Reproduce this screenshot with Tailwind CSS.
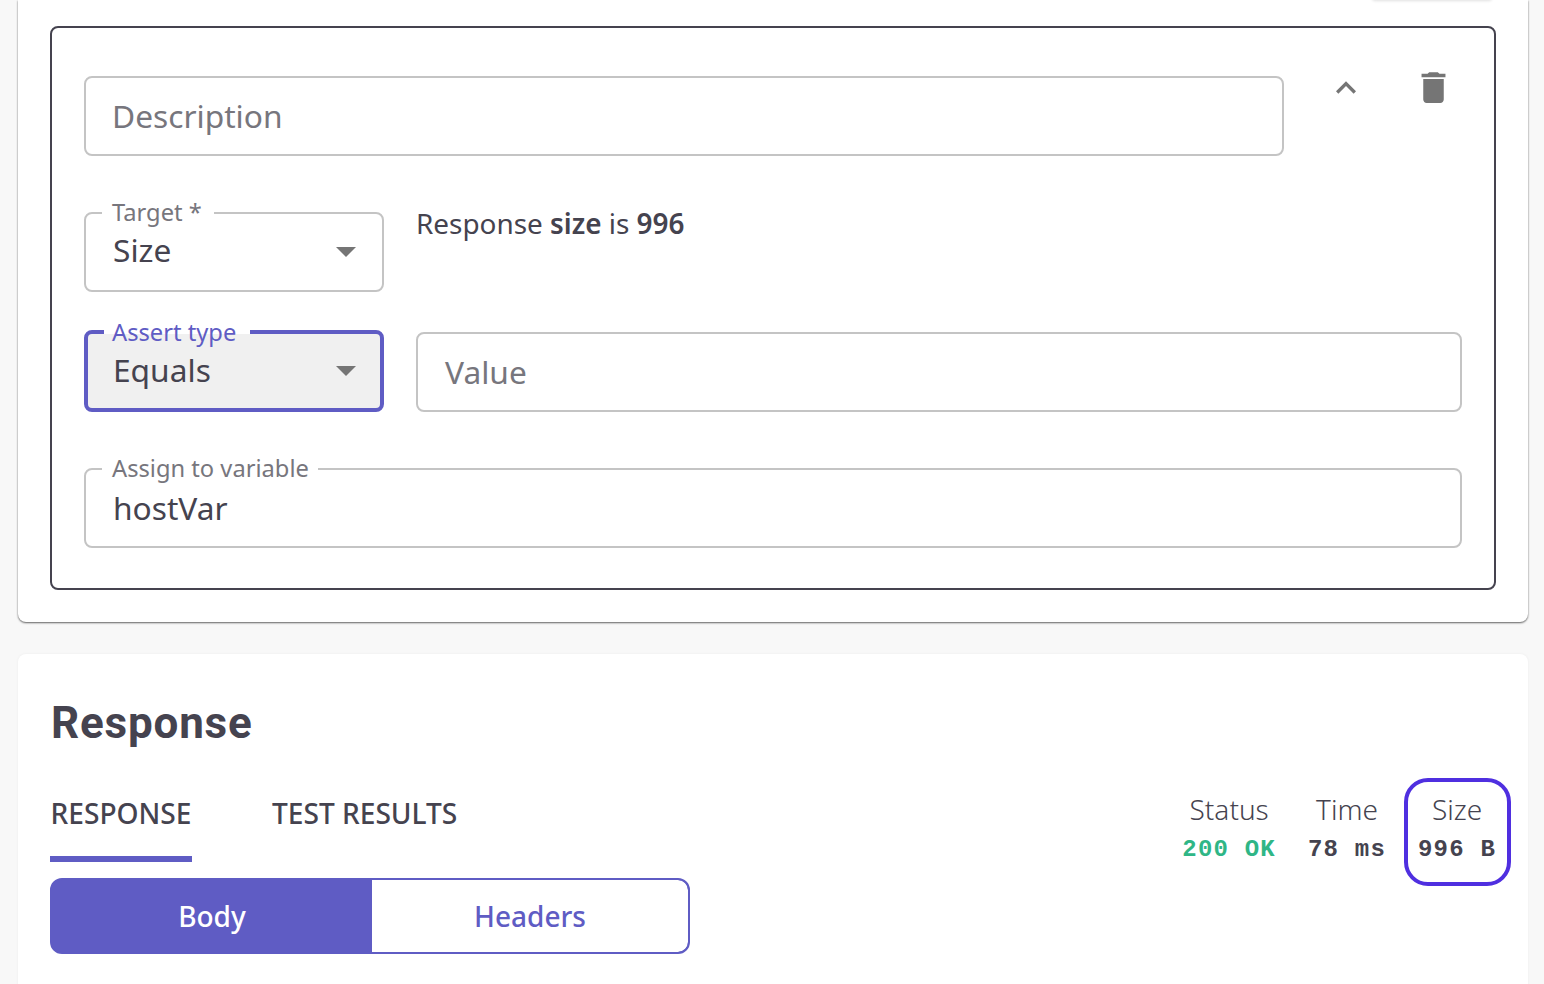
<!doctype html>
<html><head><meta charset="utf-8"><script src="https://cdn.jsdelivr.net/npm/@tailwindcss/browser@4"></script></head>
<body class="m-0">
<div class="relative h-[984px] w-[1544px] overflow-hidden bg-[#f8f8f8] pl-[18px] pr-4 font-['Noto_Sans',sans-serif] text-[#45434f]">
  <div class="absolute left-[1372px] top-[-6px] h-[6px] w-[120px] rounded bg-white shadow-[0_1px_3px_rgba(0,0,0,0.12)]"></div>
  <div class="h-[622px] rounded-b-lg bg-white px-8 pt-[26px] shadow-[0_1px_2px_rgba(0,0,0,0.6),0_0_3px_rgba(0,0,0,0.05)]">
    <div class="h-[564px] rounded-lg border-2 border-[#45434f] pl-8 pr-8 pt-12">
      <div class="flex items-start">
        <div class="flex h-20 w-[1200px] items-center rounded-lg border-2 border-[#c4c4c4] px-[26px] text-[31.7px] text-[#77767d]">Description</div>
        <svg class="ml-[42px] mt-[-8px] h-10 w-10 fill-[#757575]" viewBox="0 0 24 24"><path d="M12 8l-6 6 1.41 1.41L12 10.83l4.59 4.58L18 14z"/></svg>
        <svg class="ml-[47px] mt-[-9px] h-[41px] w-[41px] fill-[#757575]" viewBox="0 0 24 24"><path d="M6 19c0 1.1.9 2 2 2h8c1.1 0 2-.9 2-2V7H6v12zM19 4h-3.500l-1-1h-5l-1 1H5v2h14V4z"/></svg>
      </div>
      <div class="mt-14 flex items-start gap-8">
        <div class="relative flex h-20 w-[300px] items-center justify-between rounded-lg border-2 border-[#c4c4c4] pb-1 pl-[27px] pr-[26px] text-[31.7px]">
          <span class="absolute left-[16px] top-[-2px] h-[2px] w-[112px] bg-white"></span>
          <span class="absolute left-[26px] top-[-18px] text-[23.7px] leading-8 text-[#77767d]">Target *</span>
          <span>Size</span>
          <span class="mt-1 h-0 w-0 border-x-[10px] border-t-[10px] border-x-transparent border-t-[#757575]"></span>
        </div>
        <div class="mt-[-1px] text-[27.9px] leading-[24px]">Response <b class="font-semibold">size</b> is <b class="font-semibold">996</b></div>
      </div>
      <div class="mt-[38px] flex items-start gap-8">
        <div class="relative flex h-[82px] w-[300px] items-center justify-between rounded-lg border-4 border-[#5f5cc4] bg-[#f0f0f0] pb-[2px] pl-[25px] pr-6 text-[31.7px]">
          <span class="absolute left-4 top-[-4px] h-1 w-[146px] bg-white"></span>
          <span class="absolute left-6 top-[-18px] text-[23.7px] leading-8 text-[#5f5cc4]">Assert type</span>
          <span>Equals</span>
          <span class="mt-[2px] h-0 w-0 border-x-[10px] border-t-[10px] border-x-transparent border-t-[#757575]"></span>
        </div>
        <div class="mt-[2px] flex h-20 flex-1 items-center rounded-lg border-2 border-[#c4c4c4] px-[27px] text-[31.7px] text-[#77767d]">Value</div>
      </div>
      <div class="relative mt-14 flex h-20 items-center rounded-lg border-2 border-[#c4c4c4] pl-[27px] text-[31.7px]">
        <span class="absolute left-[16px] top-[-2px] h-[2px] w-[216px] bg-white"></span>
        <span class="absolute left-[26px] top-[-18px] text-[23.7px] leading-8 text-[#77767d]">Assign to variable</span>
        <span>hostVar</span>
      </div>
    </div>
  </div>
  <div class="mt-8 h-[400px] rounded-t-lg bg-white px-8 pt-[44px] shadow-[0_0_3px_rgba(0,0,0,0.05)]">
    <h2 class="pl-px font-['Roboto',sans-serif] text-[44px] font-bold leading-[50px] tracking-[0.8px]">Response</h2>
    <div class="mt-[30px] flex items-start justify-between">
      <div class="flex h-[86px] gap-20 text-[28.1px] font-medium">
        <div class="flex h-[84px] w-[142px] items-start justify-center border-b-[6px] border-[#5f5cc4] pt-[13px] leading-[44px]">RESPONSE</div>
        <div class="pt-[13px] leading-[44px]">TEST RESULTS</div>
      </div>
      <div class="mt-[11px] flex gap-8 text-center">
        <div><div class="text-[28px] leading-10 font-light">Status</div><div class="mt-[5px] font-['Liberation_Mono',monospace] text-2xl leading-8 font-bold tracking-[1.2px] text-[#2fb686]">200 OK</div></div>
        <div><div class="text-[28px] leading-10 font-light">Time</div><div class="mt-[5px] font-['Liberation_Mono',monospace] text-2xl leading-8 font-bold tracking-[1.2px]">78 ms</div></div>
        <div class="relative"><div class="text-[28px] leading-10 font-light">Size</div><div class="mt-[5px] font-['Liberation_Mono',monospace] text-2xl leading-8 font-bold tracking-[1.2px]">996 B</div>
          <span class="absolute left-[-14px] right-[-15px] top-[-11px] h-[108px] rounded-[24px] border-4 border-[#4f2fe0]"></span></div>
      </div>
    </div>
    <div class="mt-[12px] flex h-[76px] w-[640px] overflow-hidden rounded-xl border-2 border-[#5f5cc4] bg-[#5f5cc4] text-[28px] font-medium">
      <div class="flex w-[320px] items-center justify-center text-white">Body</div>
      <div class="flex flex-1 items-center justify-center rounded-r-[10px] bg-white text-[#5f5cc4]">Headers</div>
    </div>
  </div>
</div>
</body></html>
